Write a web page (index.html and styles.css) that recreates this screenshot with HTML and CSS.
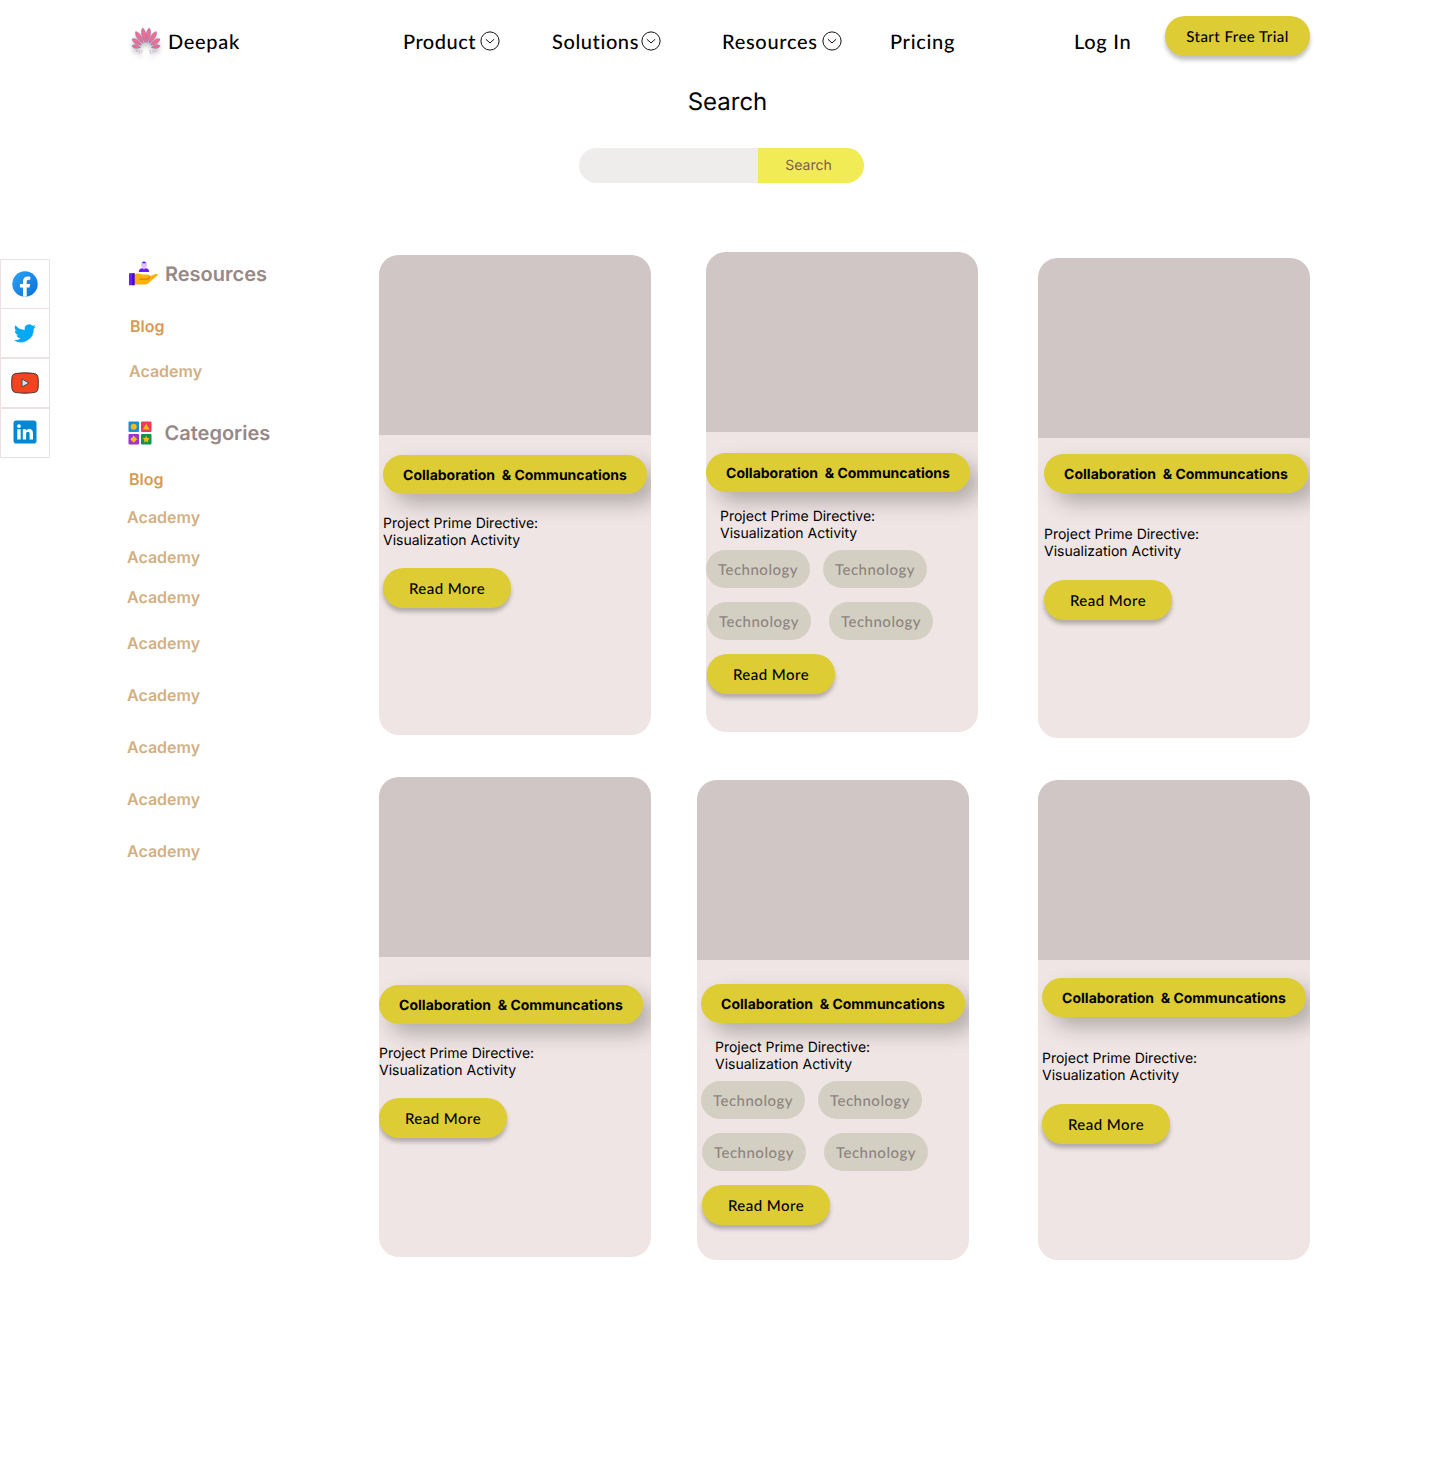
FILE: index.html
```html
<!DOCTYPE html>
<html lang="en">
<head>
<meta charset="utf-8">
<title>Deepak – Resources</title>
<link rel="stylesheet" href="styles.css">
</head>
<body>
<svg width="0" height="0" class="defs">
  <symbol id="chevron" viewBox="0 0 20 20"><circle cx="10" cy="10" r="9.1" fill="none" stroke="#111" stroke-width="1"/><path d="M5.800 8.200 10 12l4.200-3.800" fill="none" stroke="#111" stroke-width="1"/></symbol>
</svg>
<header class="header">
  <a class="brand">
    <svg class="logo" width="32" height="32" viewBox="0 0 32 32">
      <g fill="#ee6f8e" stroke="#9a6db0" stroke-width=".6">
        <path d="M16 16.500C13.600 11 13.200 4.500 16 1.700 18.800 4.500 18.400 11 16 16.500Z" transform="rotate(9.500 16 22)"/>
        <path d="M16 16.500C13.600 11 13.200 4.500 16 1.700 18.800 4.500 18.400 11 16 16.500Z" transform="rotate(-9.500 16 22)"/>
        <path d="M16 16.500C13.500 11 13 5.500 16 2.700 19 5.500 18.500 11 16 16.500Z" transform="rotate(32 16 22)"/>
        <path d="M16 16.500C13.500 11 13 5.500 16 2.700 19 5.500 18.500 11 16 16.500Z" transform="rotate(-32 16 22)"/>
        <path d="M16 16.500C13.500 12 13.200 8 16 5.500 18.800 8 18.500 12 16 16.500Z" transform="rotate(57 16 22)"/>
        <path d="M16 16.500C13.500 12 13.200 8 16 5.500 18.800 8 18.500 12 16 16.500Z" transform="rotate(-57 16 22)"/>
        <path d="M16 16.500C14 13 13.600 10 16 7.700 18.400 10 18 13 16 16.500Z" transform="rotate(82 16 22)"/>
        <path d="M16 16.500C14 13 13.600 10 16 7.700 18.400 10 18 13 16 16.500Z" transform="rotate(-82 16 22)"/>
      </g>
      <path d="M6 25h6.500M19.500 25H26M8.500 27h3.500M20 27h3.500" stroke="#b79ac6" stroke-width="1" stroke-dasharray="1.500 1.200"/>
    </svg>
    <span>Deepak</span>
  </a>
  <a class="nav-item nav-product"><span>Product</span><svg width="20" height="20"><use href="#chevron"/></svg></a>
  <a class="nav-item nav-solutions"><span>Solutions</span><svg width="20" height="20"><use href="#chevron"/></svg></a>
  <a class="nav-item nav-resources"><span>Resources</span><svg width="20" height="20"><use href="#chevron"/></svg></a>
  <a class="nav-item nav-pricing"><span>Pricing</span></a>
  <a class="nav-item nav-login"><span>Log In</span></a>
  <button class="btn btn-trial">Start Free Trial</button>
</header>

<section class="search">
  <h1>Search</h1>
  <form class="search-form"><input type="text" aria-label="Search"><button type="button">Search</button></form>
</section>

<main class="main">
  <nav class="social">
    <a><svg width="26" height="26" viewBox="0 0 26 26"><defs><linearGradient id="fb" x2="1" y2="1"><stop stop-color="#2aa4f4"/><stop offset="1" stop-color="#0a6fdc"/></linearGradient></defs><circle cx="13" cy="13" r="12.700" fill="url(#fb)"/><path d="M11 25.600V16.500H7.900V13H11v-2.700c0-3.200 1.900-4.900 4.700-4.900 1 0 2.200.2 2.600.3v3.100h-1.700c-1.500 0-1.900.9-1.900 1.900V13h3.400l-.6 3.500h-2.800v9.100a12 12 0 0 1-3.700 0Z" fill="#fff"/></svg></a>
    <a><svg width="24" height="24" viewBox="0 0 24 24"><path fill="#03a9f4" d="M23 5.500c-.8.400-1.700.6-2.600.7.900-.6 1.700-1.500 2-2.500-.9.500-1.800.9-2.900 1.100a4.500 4.500 0 0 0-7.700 4.100A12.800 12.800 0 0 1 2.500 4.200a4.500 4.500 0 0 0 1.400 6c-.7 0-1.400-.2-2-.6a4.500 4.500 0 0 0 3.600 4.500c-.7.200-1.400.2-2 .1.500 1.800 2.200 3.100 4.200 3.100A9 9 0 0 1 1 19.200 12.800 12.800 0 0 0 20.700 7.800c.9-.6 1.700-1.400 2.300-2.300Z"/></svg></a>
    <a><svg width="28" height="22" viewBox="0 0 28 22"><path d="M5 1.500Q14 .2 23 1.500 26.500 2 27 5.500q.6 5.500 0 11-.5 3.500-4 4-9 1.300-18 0-3.500-.5-4-4-.6-5.500 0-11Q1.500 2 5 1.500Z" fill="#f4431f" stroke="#5b3a35" stroke-width="1.100"/><path d="M11 7v8l7-4Z" fill="#d9e4ea" stroke="#494b50"/></svg></a>
    <a class="linkedin"><svg width="24" height="24" viewBox="0 0 24 24"><rect x=".5" y=".5" width="23" height="23" rx="2.800" fill="#0288d1"/><path fill="#fff" d="M4.300 9.200h3.400v10.300H4.300zM6 4.200a1.900 1.900 0 1 1 0 3.800 1.900 1.900 0 0 1 0-3.800ZM9.800 9.200H13v1.500c.7-1.200 1.800-1.800 3.300-1.800 2.600 0 3.700 1.700 3.700 4.500v6.100h-3.400v-5.600c0-1.400-.4-2.200-1.600-2.200-1.300 0-1.900.9-1.900 2.300v5.500H9.800Z"/></svg></a>
  </nav>

  <aside class="sidebar">
    <h2><svg width="30" height="26" viewBox="0 0 30 26"><circle cx="15" cy="3.700" r="3" fill="#dcc2ff"/><path d="M12.800 1.800Q15-.8 17.200 1.800l-.8.500h-2.800Z" fill="#6a1bff"/><path d="M9.700 11q.3-3.800 3.600-3.800h3.400q3.300 0 3.600 3.800Z" fill="#6a1bff"/><path d="M13 6.500h4l-2 2Z" fill="#dcc2ff"/><path d="M5 13.500Q9 11.700 13 13.500h5.500q2 .6 1 2.200l7-2.700q3-.5 2.200 1.300L19 22.500q-1 .9-3 .9H5Z" fill="#f9b208"/><path d="M10.500 18.200h7q3-.3 3-2.200 0-.8-1-1.600" fill="none" stroke="#e8780c" stroke-width="1.200"/><path d="M0 12.200h5.500v12H0Z" fill="#6a1bff"/><path d="M3.300 12.200h2.200v12H3.300Z" fill="#3b0fb0"/></svg>Resources</h2>
    <a class="active">Blog</a>
    <a class="first-link">Academy</a>
    <h2 class="categories"><svg width="24" height="24" viewBox="0 0 24 24"><rect x=".5" y=".5" width="10.500" height="10.500" rx="1" fill="#1a8fd8"/><rect x="13" y=".5" width="10.500" height="10.500" rx="1" fill="#ee3a5f"/><rect x=".5" y="13" width="10.500" height="10.500" rx="1" fill="#9b35cf"/><rect x="13" y="13" width="10.500" height="10.500" rx="1" fill="#11934f"/><g fill="#fdb813"><circle cx="5.700" cy="5.700" r="3"/><path d="m18.200 2.500 3.300 6h-6.600Z"/><path d="M5.700 14.800 7.500 16.500l1.700 1.800-1.700 1.800-1.800 1.700-1.800-1.700-1.700-1.800 1.700-1.800ZM18.200 14.700l1.100 2.300 2.500.3-1.800 1.700.4 2.500-2.200-1.200-2.200 1.200.4-2.500-1.800-1.700 2.500-.3Z"/></g></svg>Categories</h2>
    <a class="active">Blog</a>
    <div class="links links-compact"><a>Academy</a><a>Academy</a><a>Academy</a></div>
    <div class="links links-loose"><a>Academy</a><a>Academy</a><a>Academy</a><a>Academy</a><a>Academy</a></div>
  </aside>

  <section class="cards">
    <div class="row row-top">
      <article class="card card-a">
        <div class="thumb"></div>
        <span class="pill">Collaboration&nbsp; &amp; Communcations</span>
        <p>Project Prime Directive:<br>Visualization Activity</p>
        <button class="btn">Read More</button>
      </article>
      <article class="card card-b tagged">
        <div class="thumb"></div>
        <span class="pill">Collaboration&nbsp; &amp; Communcations</span>
        <p>Project Prime Directive:<br>Visualization Activity</p>
        <div class="tags"><span>Technology</span><span>Technology</span></div>
        <div class="tags tags-wide"><span>Technology</span><span>Technology</span></div>
        <button class="btn">Read More</button>
      </article>
      <article class="card card-c roomy">
        <div class="thumb"></div>
        <span class="pill">Collaboration&nbsp; &amp; Communcations</span>
        <p>Project Prime Directive:<br>Visualization Activity</p>
        <button class="btn">Read More</button>
      </article>
    </div>
    <div class="row row-bottom">
      <article class="card card-d">
        <div class="thumb"></div>
        <span class="pill">Collaboration&nbsp; &amp; Communcations</span>
        <p>Project Prime Directive:<br>Visualization Activity</p>
        <button class="btn">Read More</button>
      </article>
      <article class="card card-e tagged">
        <div class="thumb"></div>
        <span class="pill">Collaboration&nbsp; &amp; Communcations</span>
        <p>Project Prime Directive:<br>Visualization Activity</p>
        <div class="tags"><span>Technology</span><span>Technology</span></div>
        <div class="tags tags-wide"><span>Technology</span><span>Technology</span></div>
        <button class="btn">Read More</button>
      </article>
      <article class="card card-f roomy">
        <div class="thumb"></div>
        <span class="pill">Collaboration&nbsp; &amp; Communcations</span>
        <p>Project Prime Directive:<br>Visualization Activity</p>
        <button class="btn">Read More</button>
      </article>
    </div>
  </section>
</main>
</body>
</html>
```
FILE: styles.css
```css
* { box-sizing: border-box; }
body { margin: 0; width: 1440px; min-height: 1465px; background: #fff; color: #000; font: 14px/17px Inter, sans-serif; text-rendering: geometricPrecision; }
h1, h2, p { margin: 0; font-weight: 400; }
button, input { border: 0; padding: 0; font: inherit; outline: 0; text-rendering: inherit; }
svg { display: block; flex: none; }
.defs { display: none; }

.header { display: grid; grid-template-columns: 273px 149px 170px 168px 184px 91px 145px; align-items: start; height: 72px; padding: 16px 0 0 130px; font: 500 20px/26px Lato, sans-serif; letter-spacing: .7px; }
.brand { display: flex; align-items: center; gap: 6px; height: 50px; }
.brand span, .nav-item span { padding-top: 2px; }
.logo { margin-top: 2px; filter: drop-shadow(0 4px 2px rgba(0, 0, 0, .25)); }
.nav-item { display: flex; justify-content: space-between; align-items: center; height: 50px; white-space: nowrap; }
.nav-product { width: 97px; letter-spacing: .5px; }
.nav-solutions { width: 109px; letter-spacing: .6px; }
.nav-resources { width: 120px; }
.btn { display: block; width: 128px; height: 40px; padding-top: 2px; border-radius: 20px; background: #dc3; box-shadow: 0 4px 4px rgba(0, 0, 0, .25); color: #000; font: 500 15px/20px Lato, sans-serif; letter-spacing: .45px; }
.btn-trial { width: 145px; }

.search { height: 180px; padding-top: 15px; }
.search h1 { width: 1440px; padding-left: 15px; text-align: center; font-size: 24px; line-height: 29px; }
.search-form { display: flex; width: 285px; height: 35px; margin: 32px 0 0 579px; border-radius: 18px; overflow: hidden; }
.search-form input { width: 179px; background: #eeedeb; }
.search-form button { width: 106px; padding: 0 5px 0 0; background: #f1eb55; color: #7b5d4b; }

.main { display: flex; align-items: flex-start; }
.social { width: 50px; margin-top: 7px; }
.social a { display: flex; align-items: center; justify-content: center; height: 50px; border: 1px solid #eee1e2; }
.social a:first-child { height: 49px; border-bottom: 0; }
.social .linkedin { padding-bottom: 2px; }

.sidebar { display: flex; flex-direction: column; width: 250px; margin-left: 77px; padding-top: 9px; font-weight: 600; font-size: 16px; line-height: 20px; color: #d1b083; }
.sidebar h2 { display: flex; align-items: center; gap: 6px; height: 26px; margin: 0 0 29px 2px; color: #978886; font-size: 20px; font-weight: 600; }
.sidebar .active { margin-left: 3px; color: #d69a50; }
.sidebar .first-link { margin: 25px 0 0 2px; }
.sidebar .categories { gap: 12.5px; margin: 39px 0 23px 1px; }
.sidebar .categories ~ .active { margin-left: 2px; }
.links { display: flex; flex-direction: column; }
.links-compact { gap: 20px; margin-top: 18px; }
.links-loose { gap: 32px; margin-top: 26px; }

.cards { width: 933px; padding-left: 2px; }
.row { display: flex; align-items: flex-start; }
.row-top { height: 525px; }
.card { display: flex; flex-direction: column; align-items: flex-start; flex: none; width: 272px; height: 480px; border-radius: 20px; background: #efe5e4; overflow: hidden; }
.thumb { flex: none; width: 272px; height: 180px; background: #d0c6c5; }
.pill { flex: none; width: 264px; height: 39px; margin: 20px 0 0 4px; border-radius: 20px; background: #dc3; box-shadow: 10px 10px 20px rgba(0, 0, 0, .25); font-weight: 700; line-height: 41px; text-align: center; white-space: nowrap; }
.card p { margin: 21px 0 19px 4px; }
.card .btn { margin-left: 4px; flex: none; }
.roomy p { margin: 33px 0 20px 4px; }
.tagged p { margin: 16px 0 8px 18px; }
.tagged .btn { margin-left: 5px; }
.tags { display: flex; gap: 13px; margin: 0 0 14px 4px; }
.tags-wide { gap: 18px; margin-left: 5px; }
.tags span { width: 104px; height: 38px; border-radius: 19px; background: #d3d0c3; color: #8e8380; font: 500 15px/41px Lato, sans-serif; letter-spacing: .5px; text-align: center; }

.card-a { margin-top: 3px; }
.card-b { margin-left: 55px; }
.card-b .pill { margin: 21px 0 0; }
.card-b p { margin-left: 14px; }
.card-b .tags { margin-left: 0; }
.card-b .tags-wide, .card-b .btn { margin-left: 1px; }
.card-c { margin: 6px 0 0 60px; }
.card-c .pill { margin: 16px 0 0 6px; }
.card-c p, .card-c .btn { margin-left: 6px; }
.card-d .pill { margin: 28px 0 0; }
.card-d p, .card-d .btn { margin-left: 0; }
.card-e { margin: 3px 0 0 46px; }
.card-e .pill { margin-top: 24px; }
.card-f { margin: 3px 0 0 69px; }
.card-f .pill { margin-top: 18px; }
```
